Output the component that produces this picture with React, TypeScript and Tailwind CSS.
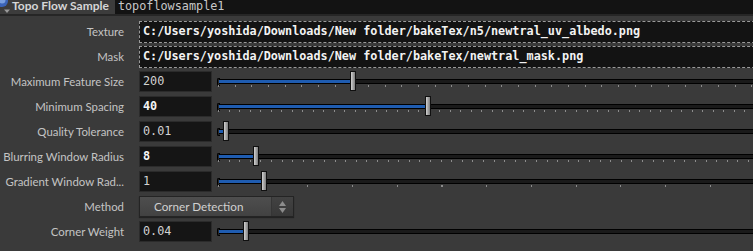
import React from 'react';

const sans = "font-['Lato','Noto_Sans',sans-serif]";
const mono = "font-['DejaVu_Sans_Mono',monospace]";

type SliderRow = {
  label: string;
  value: string;
  bold: boolean;
  handle: number;
  ticks: string;
};

const topSliders: SliderRow[] = [
  {
    label: 'Maximum Feature Size',
    value: '200',
    bold: false,
    handle: 133,
    ticks: 'bg-[repeating-linear-gradient(to_right,#8c8c8c_0_1px,transparent_1px_16.67px)]',
  },
  {
    label: 'Minimum Spacing',
    value: '40',
    bold: true,
    handle: 208,
    ticks: 'bg-[repeating-linear-gradient(to_right,#8c8c8c_0_1px,transparent_1px_10.53px)]',
  },
  { label: 'Quality Tolerance', value: '0.01', bold: false, handle: 6, ticks: '' },
  {
    label: 'Blurring Window Radius',
    value: '8',
    bold: true,
    handle: 36,
    ticks: 'bg-[repeating-linear-gradient(to_right,#8c8c8c_0_1px,transparent_1px_10.6px)]',
  },
  {
    label: 'Gradient Window Rad...',
    value: '1',
    bold: false,
    handle: 44,
    ticks: 'bg-[repeating-linear-gradient(to_right,#8c8c8c_0_1px,transparent_1px_44.7px)]',
  },
];

const cornerWeight: SliderRow = { label: 'Corner Weight', value: '0.04', bold: false, handle: 26, ticks: '' };

function Label({ text }: { text: string }) {
  return (
    <div
      className={`w-[124px] shrink-0 whitespace-nowrap text-right text-[11.4px] leading-none text-[#c4c4c4] ${sans}`}
    >
      {text}
    </div>
  );
}

function PathRow({ label, path }: { label: string; path: string }) {
  return (
    <div className="flex h-[25px] items-center">
      <Label text={label} />
      <div className="ml-[15px] flex h-[22px] flex-1 items-center border border-dashed border-[#9a9a9a] bg-[#131313] pl-[3px]">
        <span className={`whitespace-nowrap text-[11.8px] font-bold text-[#f2f2f2] ${mono}`}>{path}</span>
      </div>
    </div>
  );
}

function Slider({ row }: { row: SliderRow }) {
  return (
    <div className="flex h-[25px] items-center">
      <Label text={row.label} />
      <div className="ml-[15px] flex h-[21px] w-[73px] shrink-0 items-center border border-[#2b2b2b] bg-[#151515] pl-[3px]">
        <span
          className={`text-[11.8px] ${mono} ${row.bold ? 'font-bold text-[#f4f4f4]' : 'text-[#d2d2d2]'}`}
        >
          {row.value}
        </span>
      </div>
      <div className="relative ml-[5px] h-[25px] flex-1">
        <div className="absolute left-0 top-[9px] h-[8px] w-[3px] rounded-l-[2px] border-y border-l border-black bg-[#2a2a2a]" />
        <div className="absolute left-[2px] right-0 top-[10px] h-[5px] border-y border-black bg-[#1a1a1a]" />
        <div
          className="absolute left-[2px] top-[10px] h-[5px] border-y border-black bg-[#1f5cb0]"
          style={{ width: row.handle - 2 }}
        />
        {row.ticks && <div className={`absolute left-[1px] right-0 top-[16px] h-[2px] ${row.ticks}`} />}
        <div
          className="absolute top-[2px] h-[20px] w-[6px] border border-[#101010] bg-gradient-to-r from-[#d2d2d2] via-[#a6a6a6] to-[#7e7e7e]"
          style={{ left: row.handle }}
        />
      </div>
    </div>
  );
}

function MethodRow() {
  return (
    <div className="flex h-[25px] items-center">
      <Label text="Method" />
      <div className="ml-[15px] flex h-[21px] w-[155px] shrink-0 items-center border border-[#242424] bg-gradient-to-b from-[#4e4e4e] to-[#424242] shadow-[0_1px_1px_rgba(0,0,0,0.4)]">
        <span className={`flex-1 pl-[14px] text-[11.7px] leading-none text-[#d0d0d0] ${sans}`}>Corner Detection</span>
        <div className="flex h-full w-[22px] flex-col items-center justify-center gap-[2px] border-l border-[#353535] bg-gradient-to-b from-[#424242] to-[#383838]">
          <svg width="7" height="5" viewBox="0 0 7 5">
            <path d="M3.5 0 L7 5 L0 5 Z" fill="#8c8c8c" />
          </svg>
          <svg width="7" height="5" viewBox="0 0 7 5">
            <path d="M0 0 L7 0 L3.5 5 Z" fill="#8c8c8c" />
          </svg>
        </div>
      </div>
    </div>
  );
}

export default function App() {
  return (
    <div className="h-[251px] w-[753px] overflow-hidden bg-[#3a3a3a]">
      <div className="w-[790px]">
        <div className="flex h-[16px] border-b-2 border-[#262626] bg-[#3c3c3c]">
          <div className="relative w-[12px] shrink-0">
            <svg width="12" height="14" viewBox="0 0 12 14" className="absolute left-0 top-0">
              <circle cx="2" cy="1" r="6" fill="#3b64b8" />
              <circle cx="2" cy="0" r="3.5" fill="#7aa0e0" />
              <path d="M4 9.5 L10 9.5 L7 13 Z" fill="#9a9a9a" />
            </svg>
          </div>
          <div className={`whitespace-nowrap text-[12px] font-bold leading-[12px] text-[#d6d6d6] ${sans}`}>
            Topo Flow Sample
          </div>
          <div className="ml-[6px] flex-1 bg-[#131313] pl-[3px]">
            <div className={`text-[11.8px] leading-[12px] text-[#c8c8c8] ${mono}`}>topoflowsample1</div>
          </div>
        </div>
        <div className="pt-[3px]">
          <PathRow label="Texture" path="C:/Users/yoshida/Downloads/New folder/bakeTex/n5/newtral_uv_albedo.png" />
          <PathRow label="Mask" path="C:/Users/yoshida/Downloads/New folder/bakeTex/newtral_mask.png" />
          {topSliders.map((row) => (
            <Slider key={row.label} row={row} />
          ))}
          <MethodRow />
          <Slider row={cornerWeight} />
        </div>
      </div>
    </div>
  );
}
